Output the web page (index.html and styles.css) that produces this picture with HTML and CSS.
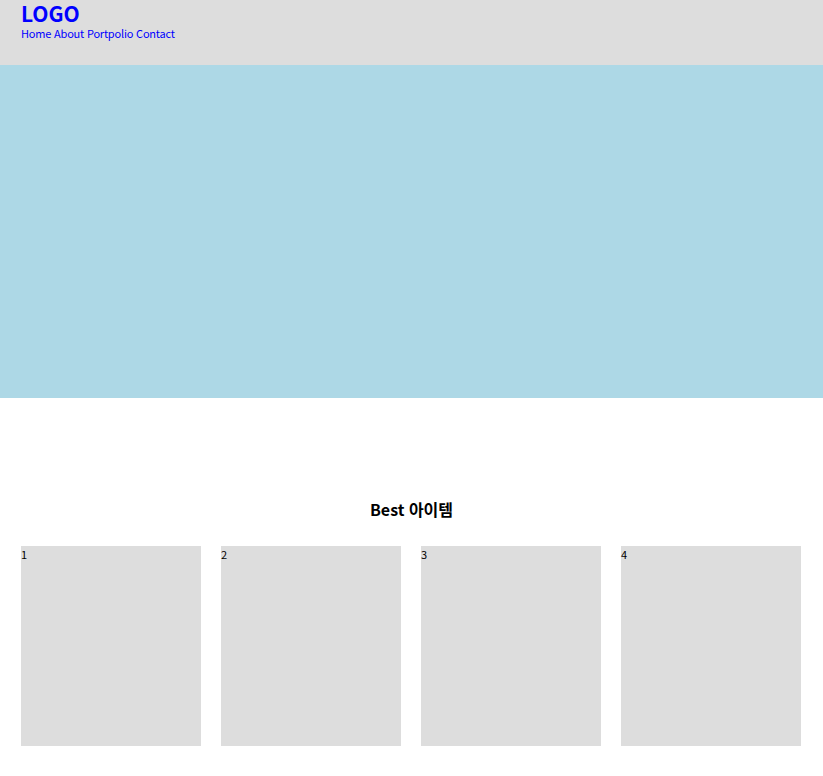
FILE: index.html
```html
<!DOCTYPE html>
<html lang="ko">
<head>
<meta charset="utf-8">
<title>Best</title>
<link rel="stylesheet" href="styles.css">
</head>
<body>
<header class="header">
  <h1 class="logo"><a href="#">LOGO</a></h1>
  <nav class="nav">
    <a href="#">Home</a>
    <a href="#">About</a>
    <a href="#">Portpolio</a>
    <a href="#">Contact</a>
  </nav>
</header>
<section class="hero"></section>
<section class="best">
  <h2 class="best-title">Best 아이템</h2>
  <ul class="items">
    <li class="item">1</li>
    <li class="item">2</li>
    <li class="item">3</li>
    <li class="item">4</li>
  </ul>
</section>
</body>
</html>
```
FILE: styles.css
```css
* { box-sizing: border-box; }
body {
  margin: 0;
  font-family: "Noto Sans CJK KR", "Noto Sans", sans-serif;
  color: #000;
  background: #fff;
}
a { color: #0000ff; text-decoration: none; }
.header {
  height: 65px;
  background: #dddddd;
  padding: 1px 21px 0;
}
.logo {
  margin: 0;
  font-size: 21px;
  line-height: 24px;
  font-weight: 700;
}
.nav {
  font-size: 11px;
  line-height: 16px;
  letter-spacing: -0.2px;
}
.hero {
  height: 333px;
  background: #add8e6;
}
.best {
  padding: 98px 21px 30px;
}
.best-title {
  margin: 0 0 24px;
  text-align: center;
  font-size: 16px;
  line-height: 26px;
  font-weight: 700;
}
.items {
  list-style: none;
  margin: 0;
  padding: 0;
  display: flex;
  gap: 20px;
}
.item {
  width: 180px;
  height: 200px;
  background: #dddddd;
  font-size: 11px;
  line-height: 16px;
}
```
